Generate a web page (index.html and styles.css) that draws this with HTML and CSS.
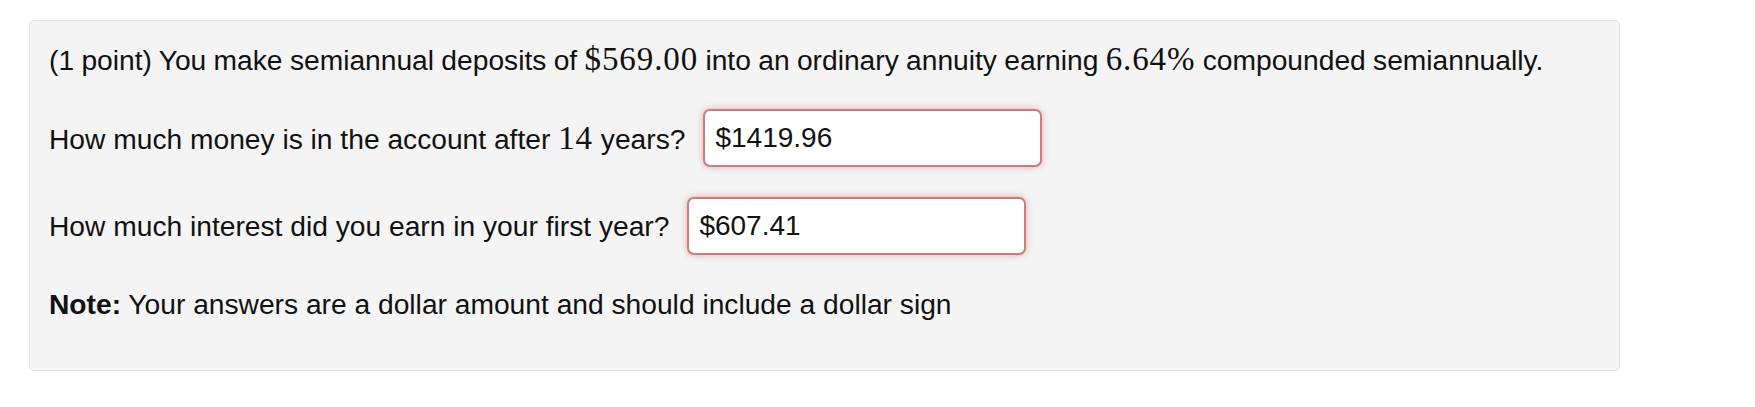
FILE: index.html
```html
<!DOCTYPE html>
<html>
<head>
<meta charset="utf-8">
<link rel="stylesheet" href="styles.css">
</head>
<body>
<div class="well">
  <p class="line first">(1 point) You make semiannual deposits of <span class="math">$569.00</span> into an ordinary annuity earning <span class="math">6.64%</span> <span class="tail">compounded semiannually.</span></p>
  <div class="row q1">
    <span class="label">How much money is in the account after <span class="math">14</span> years?</span>
    <input class="answer" type="text" value="$1419.96">
  </div>
  <div class="row q2">
    <span class="label">How much interest did you earn in your first year?</span>
    <input class="answer" type="text" value="$607.41">
  </div>
  <p class="line note"><b>Note:</b> Your answers are a dollar amount and should include a dollar sign</p>
</div>
</body>
</html>
```
FILE: styles.css
```css
html, body {
  margin: 0;
  padding: 0;
  background: #ffffff;
}
body {
  padding: 20px 0 0 29px;
  font-family: "Liberation Sans", Arial, Helvetica, sans-serif;
  font-size: 28.2px;
  color: #111;
}
.well {
  box-sizing: border-box;
  width: 1591px;
  height: 351px;
  background: #f4f4f4;
  border: 1px solid #e2e2e2;
  border-radius: 5px;
  padding: 18px 19px 0 19px;
}
.line {
  margin: 0;
  line-height: 40px;
  height: 40px;
  white-space: nowrap;
}
.first {
  word-spacing: -0.5px;
}
.math {
  font-family: "Liberation Serif", "Times New Roman", serif;
  font-size: 33px;
  letter-spacing: 0.9px;
  word-spacing: 0;
}
.row {
  display: flex;
  align-items: center;
  margin-top: 30px;
  height: 58px;
  white-space: nowrap;
}
.answer {
  box-sizing: border-box;
  width: 339px;
  height: 58px;
  margin-left: 18px;
  padding: 0 10px;
  font-family: "Liberation Sans", Arial, Helvetica, sans-serif;
  font-size: 28px;
  color: #111;
  background: #fff;
  border: 2px solid #d17a7a;
  border-radius: 7px;
  box-shadow: 0 0 7px rgba(200, 90, 90, 0.45);
  outline: none;
}
.note {
  margin-top: 29px;
}
```
